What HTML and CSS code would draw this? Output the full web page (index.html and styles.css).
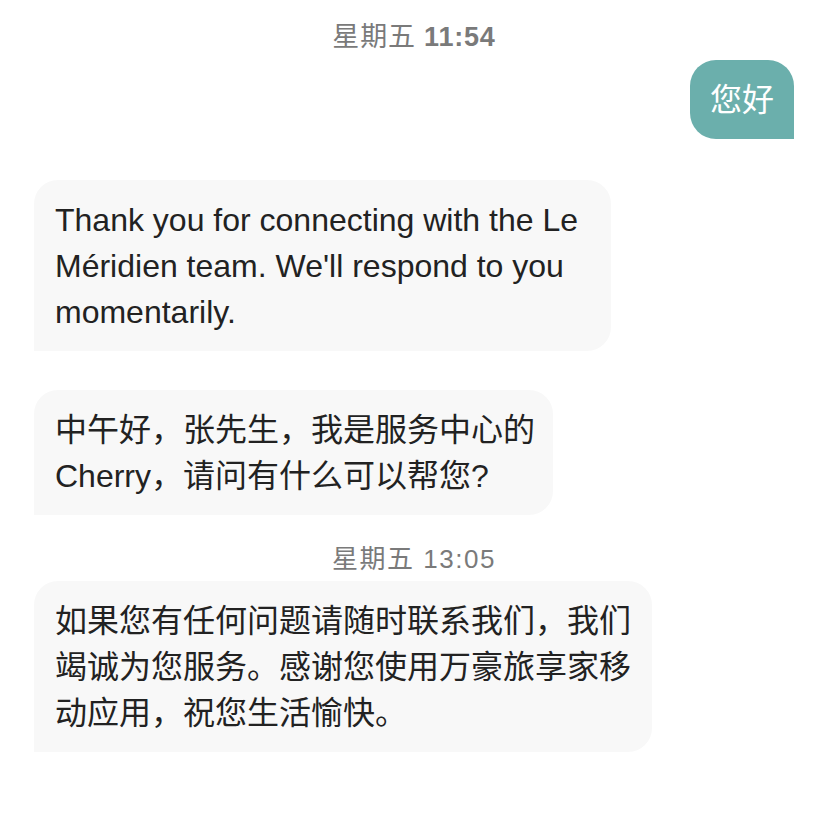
FILE: index.html
```html
<!DOCTYPE html>
<html lang="zh-CN">
<head>
<meta charset="utf-8">
<title>Chat</title>
<link rel="stylesheet" href="styles.css">
</head>
<body>
<div class="chat">
  <div class="time time-first">星期五 <b>11:54</b></div>
  <div class="bubble out">您好</div>
  <div class="bubble in in-first">Thank you for connecting with the Le<br>Méridien team. We'll respond to you<br>momentarily.</div>
  <div class="bubble in in-second">中午好，张先生，我是服务中心的<br>Cherry，请问有什么可以帮您?</div>
  <div class="time time-second">星期五 13:05</div>
  <div class="bubble in">如果您有任何问题请随时联系我们，我们<br>竭诚为您服务。感谢您使用万豪旅享家移<br>动应用，祝您生活愉快。</div>
</div>
</body>
</html>
```

FILE: styles.css
```css
html, body {
  margin: 0;
  padding: 0;
  background: #ffffff;
}

body {
  font-family: "Liberation Sans", "Noto Sans CJK SC", sans-serif;
  color: #222222;
}

.chat {
  display: flex;
  flex-direction: column;
  padding: 22px 34px;
}

.time {
  align-self: center;
  font-size: 26px;
  line-height: 30px;
  color: #7a7a7a;
}

.time b {
  font-weight: 700;
}

.time-first {
  margin-bottom: 8px;
  font-size: 27px;
  letter-spacing: 0.8px;
}

.time-second {
  margin-top: 29px;
  margin-bottom: 7px;
  letter-spacing: 1.5px;
}

.bubble {
  font-size: 32px;
  line-height: 46px;
  white-space: nowrap;
}

.out {
  align-self: flex-end;
  background: #6bafac;
  color: #ffffff;
  padding: 17px 20px 16px 20px;
  border-radius: 26px 26px 0 26px;
  margin-bottom: 41px;
}

.in {
  align-self: flex-start;
  background: #f8f8f8;
  padding: 17px 21px 16px 21px;
  border-radius: 24px 24px 24px 0;
}

.in-first {
  padding-right: 33px;
  margin-bottom: 39px;
}

.in-second {
  padding-right: 18px;
}
```
